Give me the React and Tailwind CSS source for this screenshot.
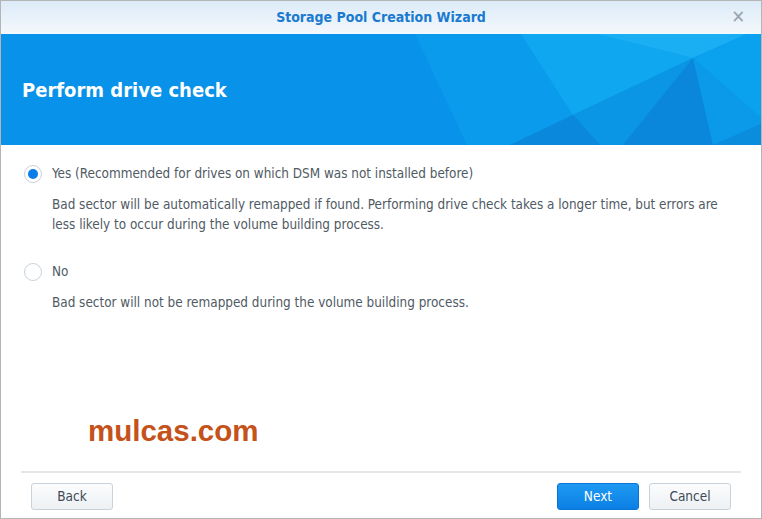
function Banner() {
  return (
    <div className="relative h-[111px] bg-[#0892e9] overflow-hidden flex items-center px-[21px]">
      <svg className="absolute inset-0 w-full h-full" viewBox="0 0 760 111" preserveAspectRatio="none">
        <polygon points="414,0 596,0 692,24 572,81 509,111 466,111" fill="#0b9bec" />
        <polygon points="520,0 596,0 692,24 572,81" fill="#0fa8f0" />
        <polygon points="596,0 746,0 692,24" fill="#1aaef3" />
        <polygon points="746,0 760,0 760,84 692,24" fill="#0aa2ef" />
        <polygon points="572,81 692,24 622,111 599,111" fill="#0b95e5" />
        <polygon points="692,24 712,111 622,111" fill="#0a87da" />
        <polygon points="572,81 599,111 509,111" fill="#0a88dc" />
        <polygon points="692,24 760,84 760,90 712,111" fill="#0b9ae9" />
        <polygon points="712,111 760,90 760,111" fill="#0a8ddd" />
      </svg>
      <h1 className="relative text-white font-bold text-[20px] mt-[1px]">Perform drive check</h1>
    </div>
  );
}

function Radio({ checked }) {
  return (
    <span className="w-[18px] h-[18px] rounded-full border border-[#c7d3dd] bg-white flex items-center justify-center shrink-0">
      {checked && <span className="w-[10px] h-[10px] rounded-full bg-[#0a7de6]" />}
    </span>
  );
}

function Option({ checked, label, children }) {
  return (
    <div className="flex flex-col">
      <div className="flex items-center gap-[10px] pl-[23px] h-[20px]">
        <Radio checked={checked} />
        <span>{label}</span>
      </div>
      <div className="pl-[51px] pr-[20px] mt-[11px] leading-[20px]">{children}</div>
    </div>
  );
}

function Button({ primary, children }) {
  return (
    <button
      className={
        primary
          ? "w-[82px] h-[27px] rounded-[3px] border border-[#0a74d6] bg-gradient-to-b from-[#1e9af2] to-[#0b7fe4] text-white text-[13.5px]"
          : "w-[82px] h-[27px] rounded-[3px] border border-[#c8d2da] bg-gradient-to-b from-[#fbfcfd] to-[#edf1f4] text-[#3d4a55] text-[13.5px]"
      }
    >
      {children}
    </button>
  );
}

export default function App() {
  return (
    <div className="w-[762px] h-[519px] border border-[#b5b5b5] bg-white flex flex-col font-['DejaVu_Sans_Condensed','DejaVu_Sans',sans-serif] text-[13.4px] text-[#505a64]">
      <div className="h-[33px] shrink-0 relative flex items-center justify-center bg-gradient-to-b from-[#dcebf8] to-[#f4f8fc]">
        <span className="font-bold text-[14px] text-[#1a7ad0]">Storage Pool Creation Wizard</span>
        <span className="absolute right-[16px] top-[7px] text-[#9aa3ab] text-[18px] leading-none">✕</span>
      </div>
      <Banner />
      <div className="flex flex-col pt-[19px] gap-[27px]">
        <Option checked label="Yes (Recommended for drives on which DSM was not installed before)">
          Bad sector will be automatically remapped if found. Performing drive check takes a longer time, but errors are less likely to occur during the volume building process.
        </Option>
        <Option label="No">Bad sector will not be remapped during the volume building process.</Option>
      </div>
      <div className="flex-1 flex items-end pl-[87px] pb-[26px]">
        <span className="font-['Liberation_Sans',sans-serif] font-bold text-[29.5px] text-[#c4521a] leading-none">mulcas.com</span>
      </div>
      <div className="mx-[20px] h-[2px] bg-[#e4e6e8]" />
      <div className="flex items-center justify-between px-[30px] pt-[10px] pb-[8px]">
        <Button>Back</Button>
        <div className="flex gap-[10px]">
          <Button primary>Next</Button>
          <Button>Cancel</Button>
        </div>
      </div>
    </div>
  );
}
